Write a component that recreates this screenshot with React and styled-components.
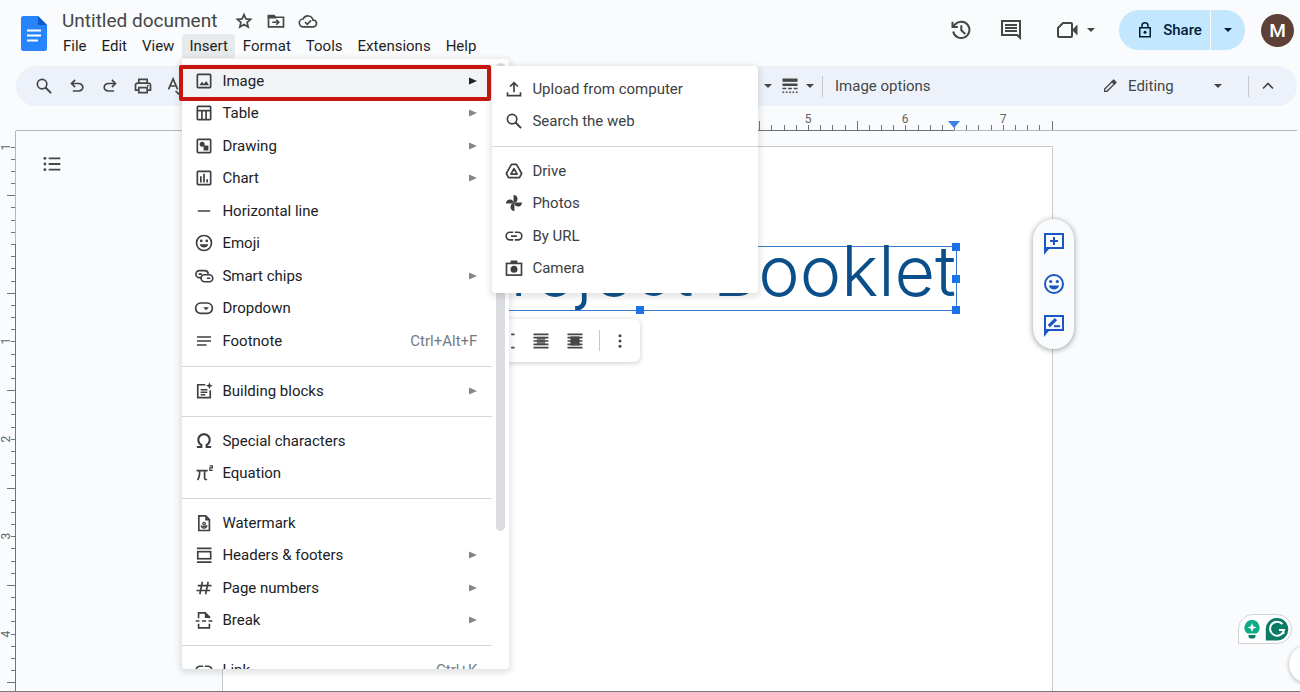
import React from "react";
import styled, { createGlobalStyle } from "styled-components";

const GlobalStyle = createGlobalStyle`
  *, *::before, *::after { box-sizing: border-box; }
  body {
    margin: 0;
    background: #f9fbfd;
    color: #1f1f1f;
    font-family: Roboto, "Liberation Sans", sans-serif;
    font-size: 15px;
    overflow: hidden;
  }
  button, input { font: inherit; color: inherit; }
`;

/* ---------- icons ---------- */

const Svg = styled.svg`
  display: block;
  flex: none;
  width: ${(p) => p.$size || 20}px;
  height: ${(p) => p.$size || 20}px;
  fill: ${(p) => (p.$fill ? "currentColor" : "none")};
  stroke: ${(p) => (p.$fill ? "none" : "currentColor")};
  stroke-width: 2;
  & .solid { fill: currentColor; stroke: none; }
`;

const Drop = styled.svg.attrs({ viewBox: "0 0 8 4", "aria-hidden": true, children: <path d="M0 0h8L4 4z" /> })`
  display: block;
  flex: none;
  width: 8px;
  height: 4px;
  fill: currentColor;
`;

const smile = (
  <>
    <circle cx="12" cy="12" r="9" />
    <circle className="solid" cx="8.7" cy="9.5" r="1.6" />
    <circle className="solid" cx="15.3" cy="9.5" r="1.6" />
    <path className="solid" d="M6.8 13.5h10.4c-.8 2.5-2.8 4-5.2 4s-4.400-1.500-5.200-4z" />
  </>
);

const shapes = {
  image: (
    <>
      <rect x="4" y="4" width="16" height="16" rx="1" />
      <path className="solid" d="M6.500 17.200l3.200-4.200 2.200 2.700 2.800-3.700 3.300 5.200z" />
    </>
  ),
  table: (
    <>
      <rect x="4" y="4" width="16" height="16" rx="1" />
      <path d="M4 9.200h16M9.500 9.200V20M14.500 9.200V20" />
    </>
  ),
  drawing: (
    <>
      <rect x="4" y="4" width="16" height="16" rx="1" />
      <circle className="solid" cx="9.800" cy="9.800" r="3" />
      <path className="solid" d="M11.500 11.500h5.800v5.800h-5.800z" />
    </>
  ),
  chart: (
    <>
      <rect x="4" y="4" width="16" height="16" rx="1" />
      <path d="M8.200 10v7.500M12 7v10.500M15.800 13.500v4" />
    </>
  ),
  line: <path d="M4.500 12h15" />,
  emoji: smile,
  chips: (
    <>
      <path d="M9 14H6.500a4.200 4.200 0 0 1 0-8.400H13a4.200 4.200 0 0 1 4 3.900" />
      <rect x="8.500" y="10.500" width="14" height="8.400" rx="4.200" />
      <path d="M5.500 9.800h4M15.500 14.700h4" />
    </>
  ),
  dropdown: (
    <>
      <rect x="2" y="6" width="20" height="12.500" rx="6" />
      <path className="solid" d="M11 11h7l-3.500 3.700z" />
    </>
  ),
  footnote: <path d="M3.500 7.200h17M3.500 12h17M3.500 16.800h11.500" />,
  blocks: (
    <>
      <path d="M13.500 4.500H4.500v15.500h15v-9" />
      <path d="M8 10.500h8M8 13.500h8M8 16.500h5.500" />
      <path className="solid" d="M18.500 1.500l1.200 3 3 1.200-3 1.200-1.200 3-1.200-3-3-1.200 3-1.200z" />
    </>
  ),
  omega: <path strokeWidth="2.600" d="M3.500 19.200h5.300v-2.400a6.900 6.900 0 1 1 6.400 0v2.400h5.300" />,
  pi: (
    <>
      <path d="M3 9.200h13.500M6.800 9.500c0 5-.8 8.500-2.500 11M12.700 9.500v8.600c0 1.700 1.500 2.100 2.800 1.300" />
      <path strokeWidth="1.500" d="M18.800 3.300h3.200v2.500h-3v3h3.500" />
    </>
  ),
  watermark: (
    <>
      <path d="M14 3.500H5.800V21h12.700V8z" />
      <path className="solid" d="M13.500 3v6h5.800z" />
      <circle cx="12.100" cy="12.800" r="1.500" strokeWidth="1.500" />
      <path strokeWidth="1.500" d="M8.800 14.800c0 2.800 1.500 3.400 3.300 3.400s3.300-.6 3.300-3.400M9.500 17l5.200-1.500" />
    </>
  ),
  headers: (
    <>
      <path d="M3.500 4h17.500M3.500 20.500h17.500" />
      <rect x="4.500" y="8" width="15.500" height="8.500" />
    </>
  ),
  hash: <path d="M10 4.500L7 19.500M17 4.500L14 19.500M4.500 9.200h16.500M3 15h16.500" />,
  pagebreak: (
    <>
      <path d="M5.500 9.800V3.500H13.500L18.500 8.500V9.800M5.500 16.500V21.500H18.500V16.500" />
      <path className="solid" d="M13 3v6.500h6z" />
      <path d="M2 13.200h4.500M9.500 13.200h5M17.500 13.200h4.500" />
    </>
  ),
  link: <path d="M11 7.500H7.200a4.600 4.600 0 0 0 0 9.200H11M13 7.500h3.800a4.600 4.600 0 0 1 0 9.200H13M8.500 12.100h7" />,
  upload: <path d="M12 16V4.500M7.300 9L12 4.300 16.700 9M4.200 16v4h15.600v-4" />,
  search: (
    <>
      <circle cx="9.700" cy="9.700" r="5.700" />
      <path strokeWidth="2.400" d="M13.800 13.800l6.700 6.700" />
    </>
  ),
  drive: (
    <>
      <path strokeLinejoin="round" d="M9 4h6l6.200 11-2.700 5H5.500l-2.700-5z" />
      <path strokeLinejoin="round" d="M12 9.300l3.800 6.400H8.200z" />
    </>
  ),
  photos: (
    <g className="solid">
      <path d="M11.500 2.500h.7c2.800.5 4 2.200 4 4.700 0 2.600-1.500 4.300-4.700 4.800z" />
      <path d="M21.500 11.500v.7c-.5 2.800-2.200 4-4.700 4-2.600 0-4.300-1.500-4.800-4.700z" />
      <path d="M12.500 21.500h-.7c-2.800-.5-4-2.200-4-4.700 0-2.600 1.500-4.300 4.700-4.800z" />
      <path d="M2.500 12.500v-.7c.5-2.800 2.200-4 4.700-4 2.600 0 4.300 1.500 4.800 4.700z" />
    </g>
  ),
  camera: (
    <>
      <rect x="3" y="6.500" width="18" height="14" />
      <path className="solid" d="M8 3h8v4H8z" />
      <circle className="solid" cx="12" cy="13.500" r="4.200" />
    </>
  ),
  star: <path d="M12 4.300l2.300 5.200 5.700.5-4.300 3.700 1.300 5.500-5-3-5 3 1.300-5.500L4 10l5.700-.5z" />,
  move: (
    <>
      <path d="M3 5.500h6.500l2 2H21v11.500H3z" />
      <path className="solid" d="M2 5h8l2.500 4H2z" />
      <path d="M7.500 13.500h7.500M12.300 10.500l3 3-3 3" />
    </>
  ),
  cloud: (
    <>
      <path d="M6.500 19a4.700 4.700 0 0 1-.4-9.400 6.300 6.300 0 0 1 11.900 1.400A4 4 0 0 1 18.500 19z" />
      <path d="M8.500 13.300l2.600 2.600 4.600-4.600" />
    </>
  ),
  history: (
    <>
      <path d="M4.200 13.500a8.200 8.200 0 1 0 2-7.200L3.500 9" />
      <path d="M3.500 3.800V9h5.300M12.300 7.300v5l4 3.700" />
    </>
  ),
  comment: (
    <>
      <path d="M3 3h18v16.500l-2.800-2.500H3z" />
      <path className="solid" d="M22 22l-5-5h5z" />
      <path d="M6 7h12M6 10h12M6 13h12" />
    </>
  ),
  video: (
    <>
      <path d="M8 5h8a1 1 0 0 1 1 1v12a1 1 0 0 1-1 1H4a1 1 0 0 1-1-1V10z" />
      <path className="solid" d="M17 12l5.500-5.500v11z" />
    </>
  ),
  lock: (
    <>
      <rect x="5" y="9" width="14" height="12" />
      <path d="M8 9V6.200a4 4 0 0 1 8 0V9" />
      <circle className="solid" cx="12" cy="15" r="2" />
    </>
  ),
  print: (
    <>
      <path d="M7 8V4h10v4M7 17H3V11a2.500 2.500 0 0 1 2.500-2.500h13A2.500 2.500 0 0 1 21 11v6h-4" />
      <path d="M7 14h10v6H7z" />
      <circle className="solid" cx="17.800" cy="11.700" r="1.100" />
    </>
  ),
  spell: (
    <>
      <path d="M3 16L8.500 3.500 14 16M5 12h7" />
      <path d="M11.500 18l3.500 3.500 7-7" />
    </>
  ),
  pencil: (
    <>
      <path d="M4 20v-3.500L15 5.500l3.500 3.500L7.500 20z" />
      <path className="solid" d="M14 5l2.500-2.500a1.500 1.500 0 0 1 2 0l3 3a1.500 1.500 0 0 1 0 2L19 10z" />
    </>
  ),
  up: <path d="M6 15l6-6 6 6" />,
  outline: (
    <>
      <path strokeWidth="2.200" d="M8 5.200h14M8 12h14M8 18.800h14" />
      <g className="solid">
        <circle cx="3.500" cy="5.200" r="1.700" />
        <circle cx="3.500" cy="12" r="1.700" />
        <circle cx="3.500" cy="18.800" r="1.700" />
      </g>
    </>
  ),
  dash: (
    <>
      <path strokeWidth="4" d="M3 5h18" />
      <path d="M3 10.500h18" strokeWidth="3" />
      <path d="M3 15h4.500M9.700 15h4.500M16.500 15H21" />
      <path d="M3 19.500h2M7 19.500h2M11 19.500h2M15 19.500h2M19 19.500h2" />
    </>
  ),
  wrap: <path d="M3 4h4M3 20h4M17 4h4M17 20h4" />,
  behind: (
    <>
      <path d="M3 4h18M3 8h18M3 12h18M3 16h18M3 20h18" />
      <path className="solid" opacity=".7" d="M7 7h10v10H7z" />
    </>
  ),
  front: (
    <>
      <path d="M3 4h18M3 8h18M3 12h18M3 16h18M3 20h18" />
      <path className="solid" d="M6.500 6.500h11v11h-11z" />
    </>
  ),
  more: (
    <g className="solid">
      <circle cx="12" cy="5" r="2" />
      <circle cx="12" cy="12" r="2" />
      <circle cx="12" cy="19" r="2" />
    </g>
  ),
  addComment: (
    <>
      <path d="M3 21V3h18v14H6z" />
      <path className="solid" d="M2 23v-7h7z" />
      <path d="M12 6v8M8 10h8" />
    </>
  ),
  suggest: (
    <>
      <path d="M3 21V3h18v14H6z" />
      <path className="solid" d="M2 23v-7h7z" />
      <path strokeWidth="3.200" d="M6.800 13.200L14 6.200" />
      <path d="M12 13.200h6" />
    </>
  ),
};

const symbols = {
  undo: "M280-200v-80h284q63 0 109.500-40T720-420q0-60-46.500-100T564-560H312l104 104-56 56-200-200 200-200 56 56-104 104h252q97 0 166.500 63T800-420q0 94-69.500 157T564-200H280Z",
  redo: "M396-200q-97 0-166.500-63T160-420q0-94 69.500-157T396-640h252L544-744l56-56 200 200-200 200-56-56 104-104H396q-63 0-109.500 40T240-420q0 60 46.500 100T396-280h284v80H396Z",
};

function Icon({ name, size }) {
  if (symbols[name]) {
    return (
      <Svg viewBox="0 -960 960 960" $size={size} $fill aria-hidden="true">
        <path d={symbols[name]} />
      </Svg>
    );
  }
  return (
    <Svg viewBox="0 0 24 24" $size={size} aria-hidden="true">
      {shapes[name]}
    </Svg>
  );
}

/* ---------- frame ---------- */

const Shell = styled.div`
  display: flex;
  flex-direction: column;
  height: 100vh;
  border-bottom: 1px solid #77797c;
`;

const Header = styled.header`
  display: flex;
  align-items: flex-start;
  height: 66px;
  padding-left: 21px;
`;

const Logo = styled.a`
  display: block;
  margin-top: 16px;
  & svg { display: block; width: 26px; height: 35px; }
`;

const TitleColumn = styled.div`
  padding: 7px 0 0 8px;
`;

const TitleRow = styled.div`
  display: flex;
  align-items: center;
  gap: 12px;
  height: 27px;
  color: #444746;
`;

const TitleInput = styled.input`
  width: 167px;
  height: 26px;
  padding: 0 0 0 6px;
  border: 1px solid transparent;
  background: none;
  font-size: 19px;
`;

const IconButton = styled.button`
  display: flex;
  align-items: center;
  justify-content: center;
  flex: none;
  width: ${(p) => p.$w || 20}px;
  height: ${(p) => p.$h || 20}px;
  padding: 0;
  border: 0;
  background: none;
  color: ${(p) => p.$color || "#444746"};
  cursor: pointer;
`;

const MenuBar = styled.nav`
  display: flex;
  gap: 1px;
  padding-left: 1px;
`;

const MenuAnchor = styled.div`
  position: relative;
`;

const MenuButton = styled.button`
  height: 24px;
  padding: 0 7px;
  border: 0;
  border-radius: 4px 4px 0 0;
  background: ${(p) => (p.$open ? "#e7eaed" : "none")};
  line-height: 24px;
  cursor: pointer;
`;

const HeaderActions = styled.div`
  display: flex;
  align-items: center;
  margin-left: auto;
  padding: 10px 6px 0 0;
`;

const ActionGroup = styled.div`
  display: flex;
  align-items: center;
  gap: 26px;
  margin-right: 24px;
  color: #444746;
`;

const CallButton = styled.button`
  display: flex;
  align-items: center;
  gap: 8px;
  margin-left: 6px;
  padding: 0;
  border: 0;
  background: none;
  cursor: pointer;
`;

const Share = styled.div`
  display: flex;
  gap: 1px;
  height: 40px;
  overflow: hidden;
  border-radius: 20px;
  font-weight: 500;
`;

const ShareButton = styled.button`
  display: flex;
  align-items: center;
  justify-content: center;
  gap: 9px;
  width: ${(p) => p.$w}px;
  padding: 0 0 0 ${(p) => p.$pad || 0}px;
  border: 0;
  background: #c2e7ff;
  color: #001d35;
  cursor: pointer;
`;

const Avatar = styled.button`
  width: 33px;
  height: 33px;
  margin-left: 16px;
  padding: 0;
  border: 0;
  border-radius: 50%;
  background: #5d4037;
  color: #fff;
  font-size: 19px;
  font-weight: 500;
  cursor: pointer;
`;

/* ---------- toolbar ---------- */

const Toolbar = styled.div`
  display: flex;
  align-items: center;
  flex: none;
  height: 40px;
  margin: 0 3px 0 16px;
  padding: 0 10px 0 18px;
  border-radius: 20px;
  background: #edf2fa;
  color: #444746;
`;

const ToolGroup = styled.div`
  display: flex;
  align-items: center;
  gap: 13px;
  flex: 0 0 730px;
`;

const DropButton = styled(IconButton)`
  gap: 6px;
`;

const Divider = styled.span`
  flex: none;
  width: 1px;
  height: 21px;
  background: #c7c9cc;
`;

const TextButton = styled.button`
  padding: 0 12px;
  border: 0;
  background: none;
  cursor: pointer;
`;

const ModeButton = styled.button`
  display: flex;
  align-items: center;
  gap: 10px;
  width: 120px;
  margin: 0 26px 0 auto;
  padding: 0;
  border: 0;
  background: none;
  cursor: pointer;
  & svg:last-child { margin-left: auto; }
`;

/* ---------- menus ---------- */

const Panel = styled.div`
  position: absolute;
  background: #fff;
  box-shadow: 0 2px 6px 2px rgba(60, 64, 67, 0.15);
`;

const InsertPanel = styled(Panel)`
  z-index: 5;
  top: 25px;
  left: 0;
  width: 327px;
  height: calc(100vh - 82px);
  overflow: hidden;
  border-radius: 0 4px 4px 4px;
  padding: 5px 17px 0 0;
`;

const SubPanel = styled(Panel)`
  z-index: 7;
  top: 32px;
  left: 310px;
  width: 266px;
  border-radius: 4px;
  padding: 6px 0 0;
`;

const Thumb = styled.span`
  position: absolute;
  top: 4px;
  right: 4px;
  width: 9px;
  height: 468px;
  border-radius: 5px;
  background: #dadce0;
`;

const Highlight = styled.span`
  position: absolute;
  z-index: 6;
  top: 31px;
  left: -3px;
  width: 312px;
  height: 36px;
  border: 4px solid #c9150f;
  border-radius: 2px;
  pointer-events: none;
`;

const Section = styled.div`
  padding-bottom: 9px;
  & + & {
    padding-top: 7px;
    border-top: 1px solid #d5d7da;
  }
`;

const Row = styled.button`
  display: flex;
  align-items: center;
  gap: 8px;
  width: 100%;
  height: 32px;
  padding: 0 15px 0 12px;
  border: 0;
  background: ${(p) => (p.$active ? "#f1f3f4" : "none")};
  color: #3c4043;
  line-height: 16px;
  text-align: left;
  cursor: pointer;
  &:nth-child(odd) { height: 33px; }
`;

const RowLabel = styled.span`
  flex: 1;
  color: ${(p) => (p.$soft ? "#3c4043" : "#202124")};
`;

const Shortcut = styled.kbd`
  color: #757a7f;
  font-family: inherit;
`;

const Arrow = styled.svg`
  width: 8px;
  height: 8px;
  fill: ${(p) => (p.$active ? "#202124" : "#80868b")};
`;

const insertMenu = [
  [
    { icon: "image", label: "Image", sub: true, active: true },
    { icon: "table", label: "Table", sub: true },
    { icon: "drawing", label: "Drawing", sub: true },
    { icon: "chart", label: "Chart", sub: true },
    { icon: "line", label: "Horizontal line" },
    { icon: "emoji", label: "Emoji" },
    { icon: "chips", label: "Smart chips", sub: true },
    { icon: "dropdown", label: "Dropdown" },
    { icon: "footnote", label: "Footnote", keys: "Ctrl+Alt+F" },
  ],
  [{ icon: "blocks", label: "Building blocks", sub: true }],
  [
    { icon: "omega", label: "Special characters" },
    { icon: "pi", label: "Equation" },
  ],
  [
    { icon: "watermark", label: "Watermark" },
    { icon: "headers", label: "Headers & footers", sub: true },
    { icon: "hash", label: "Page numbers", sub: true },
    { icon: "pagebreak", label: "Break", sub: true },
  ],
  [{ icon: "link", label: "Link", keys: "Ctrl+K" }],
];

const imageMenu = [
  [
    { icon: "upload", label: "Upload from computer" },
    { icon: "search", label: "Search the web" },
  ],
  [
    { icon: "drive", label: "Drive" },
    { icon: "photos", label: "Photos" },
    { icon: "link", label: "By URL" },
    { icon: "camera", label: "Camera" },
  ],
];

function MenuSections({ sections, soft }) {
  return sections.map((items) => (
    <Section key={items[0].label} role="group">
      {items.map((item) => (
        <Row key={item.label} role="menuitem" $active={item.active}>
          <Icon name={item.icon} />
          <RowLabel $soft={soft}>{item.label}</RowLabel>
          {item.keys && <Shortcut>{item.keys}</Shortcut>}
          {item.sub && (
            <Arrow viewBox="0 0 8 8" $active={item.active} aria-hidden="true">
              <path d="M0 .5l8 3.500-8 3.500z" />
            </Arrow>
          )}
        </Row>
      ))}
    </Section>
  ));
}

/* ---------- rulers ---------- */

const INCH = 97.4;

const RulerBar = styled.div`
  display: flex;
  justify-content: center;
  flex: none;
  height: 25px;
  margin: 0 3px 0 16px;
  padding-right: 39px;
  border-bottom: 1px solid #b4b7ba;
`;

const RulerSvg = styled.svg`
  display: block;
  flex: none;
  width: ${(p) => p.$w}px;
  height: ${(p) => p.$h}px;
  overflow: visible;
  stroke: #6f7377;
  & text {
    fill: #5f6368;
    stroke: none;
    font-size: 12px;
    text-anchor: middle;
  }
`;

const ticks = (from, to) => {
  const list = [];
  for (let i = from * 8; i <= to * 8; i += 1) list.push(i);
  return list;
};

function TopRuler() {
  const at = (inches) => Math.round(99 + inches * INCH);
  return (
    <RulerSvg $w={830} $h={25} aria-hidden="true">
      {ticks(-1, 7.5).map((i) => {
        const x = at(i / 8) + 0.5;
        return <path key={i} d={`M${x} 24V${i % 8 !== 0 && i % 4 === 0 ? 15 : 19}`} />;
      })}
      {[1, 2, 3, 4, 5, 6, 7].map((n) => (
        <text key={n} x={at(n)} y="17">{n}</text>
      ))}
      <path d="M100 24.500H732" />
      <path d="M726 15h12l-6 7z" fill="#3f7fe8" stroke="none" />
    </RulerSvg>
  );
}

const SideRulerBox = styled.div`
  flex: none;
  width: 16px;
  overflow: hidden;
`;

function SideRuler() {
  const at = (inches) => Math.round(113 + inches * INCH);
  return (
    <SideRulerBox>
      <RulerSvg $w={16} $h={1100} aria-hidden="true">
        {ticks(-1, 9).map((i) => {
          const y = at(i / 8) + 0.5;
          return <path key={i} d={`M16 ${y}H${i % 8 !== 0 && i % 4 === 0 ? 7 : 11}`} />;
        })}
        {[-1, 1, 2, 3, 4, 5, 6, 7, 8].map((n) => (
          <text key={n} transform={`translate(10 ${at(n)}) rotate(-90)`}>{Math.abs(n)}</text>
        ))}
        <path d="M15.500 0V113" stroke="#b4b7ba" />
        <path d="M15.500 113V1100" />
      </RulerSvg>
    </SideRulerBox>
  );
}

/* ---------- document ---------- */

const Workspace = styled.main`
  display: flex;
  flex: 1;
  min-height: 0;
  overflow: hidden;
`;

const Canvas = styled.div`
  position: relative;
  display: flex;
  justify-content: center;
  flex: 1;
  padding: 15px 41px 0 0;
  overflow: hidden;
`;

const OutlineButton = styled(IconButton)`
  position: absolute;
  top: 23px;
  left: 25px;
`;

const Page = styled.article`
  position: relative;
  flex: none;
  width: 831px;
  height: 1075px;
  padding: 99px 95px 0 100px;
  border: 1px solid #c7c9cc;
  background: #fff;
`;

const Selection = styled.div`
  position: relative;
  height: 65px;
  border: 1px solid #3a79c9;
`;

const Heading = styled.h1`
  margin: 0;
  color: #0b4f8a;
  font-family: Inter, Lato, sans-serif;
  font-size: 70px;
  font-weight: 300;
  line-height: 48px;
  text-align: right;
  white-space: nowrap;
`;

const Handle = styled.span`
  position: absolute;
  top: ${(p) => p.$y};
  left: ${(p) => p.$x};
  width: 8px;
  height: 8px;
  margin: -4px;
  background: #1a73e8;
`;

const ImageBar = styled.div`
  display: flex;
  align-items: center;
  gap: 14px;
  width: 200px;
  height: 43px;
  margin: 8px 0 0 117px;
  padding: 0 14px 0 8px;
  justify-content: flex-end;
  border-radius: 6px;
  background: #fff;
  box-shadow: 0 1px 4px 1px rgba(60, 64, 67, 0.2);
`;

const SidePill = styled.div`
  position: absolute;
  top: 72px;
  right: -22px;
  display: flex;
  flex-direction: column;
  align-items: center;
  justify-content: space-between;
  width: 41px;
  height: 130px;
  padding: 12px 0;
  border-radius: 21px;
  background: #f9fbfd;
  box-shadow: 0 1px 5px 1px rgba(60, 64, 67, 0.4);
`;

const WritingHelper = styled.div`
  position: absolute;
  right: 8px;
  bottom: 47px;
  display: flex;
  align-items: center;
  gap: 4px;
  width: 54px;
  height: 30px;
  padding: 0 2px 0 4px;
  border: 1px solid #d0d3d8;
  border-radius: 15px 15px 15px 0;
  background: #fff;
`;

const SideTab = styled.button`
  position: absolute;
  right: -27px;
  bottom: 8px;
  width: 38px;
  height: 38px;
  border: 0;
  border-radius: 50%;
  background: #fff;
  box-shadow: 0 1px 4px rgba(60, 64, 67, 0.4);
`;

const menus = ["File", "Edit", "View", "Insert", "Format", "Tools", "Extensions", "Help"];

export default function App() {
  return (
    <Shell>
      <GlobalStyle />
      <Header>
        <Logo href="#" aria-label="Docs home">
          <svg viewBox="0 0 26 35" aria-hidden="true">
            <path d="M2.500 0H17l9 9v23.500a2.500 2.500 0 0 1-2.500 2.500h-21A2.500 2.500 0 0 1 0 32.500v-30A2.500 2.500 0 0 1 2.500 0z" fill="#2684fc" />
            <path d="M17 0l9 9h-9z" fill="#0d5bcd" />
            <path d="M6 14.500h14M6 19.500h14M6 24.500h11" stroke="#fff" strokeWidth="2" />
          </svg>
        </Logo>
        <TitleColumn>
          <TitleRow>
            <TitleInput aria-label="Document title" defaultValue="Untitled document" />
            <IconButton aria-label="Star"><Icon name="star" size={20} /></IconButton>
            <IconButton aria-label="Move"><Icon name="move" size={20} /></IconButton>
            <IconButton aria-label="Document status"><Icon name="cloud" size={20} /></IconButton>
          </TitleRow>
          <MenuBar aria-label="Main">
            {menus.map((name) =>
              name === "Insert" ? (
                <MenuAnchor key={name}>
                  <MenuButton $open aria-expanded="true">{name}</MenuButton>
                  <InsertPanel role="menu" aria-label="Insert">
                    <MenuSections sections={insertMenu} />
                    <Thumb />
                  </InsertPanel>
                  <Highlight />
                  <SubPanel role="menu" aria-label="Image">
                    <MenuSections sections={imageMenu} soft />
                  </SubPanel>
                </MenuAnchor>
              ) : (
                <MenuButton key={name}>{name}</MenuButton>
              )
            )}
          </MenuBar>
        </TitleColumn>
        <HeaderActions>
          <ActionGroup>
            <IconButton $w={24} aria-label="Version history"><Icon name="history" size={24} /></IconButton>
            <IconButton $w={24} aria-label="Comments"><Icon name="comment" size={24} /></IconButton>
            <CallButton aria-label="Join a call"><Icon name="video" size={24} /><Drop /></CallButton>
          </ActionGroup>
          <Share>
            <ShareButton $w={91} $pad={9}><Icon name="lock" size={18} />Share</ShareButton>
            <ShareButton $w={34} aria-label="Share options"><Drop /></ShareButton>
          </Share>
          <Avatar aria-label="Account">M</Avatar>
        </HeaderActions>
      </Header>

      <Toolbar role="toolbar" aria-label="Formatting">
        <ToolGroup>
          <IconButton aria-label="Search the menus"><Icon name="search" size={20} /></IconButton>
          <IconButton aria-label="Undo"><Icon name="undo" size={20} /></IconButton>
          <IconButton aria-label="Redo"><Icon name="redo" size={20} /></IconButton>
          <IconButton aria-label="Print"><Icon name="print" size={20} /></IconButton>
          <IconButton aria-label="Spelling"><Icon name="spell" size={20} /></IconButton>
        </ToolGroup>
        <IconButton $w={8} aria-label="Border weight"><Drop /></IconButton>
        <DropButton $w={50} aria-label="Border dash"><Icon name="dash" size={20} /><Drop /></DropButton>
        <Divider />
        <TextButton>Image options</TextButton>
        <ModeButton><Icon name="pencil" size={16} />Editing<Drop /></ModeButton>
        <Divider />
        <IconButton $w={38} aria-label="Hide the menus"><Icon name="up" size={20} /></IconButton>
      </Toolbar>

      <RulerBar><TopRuler /></RulerBar>

      <Workspace>
        <SideRuler />
        <Canvas>
          <OutlineButton $w={22} aria-label="Show outline"><Icon name="outline" size={20} /></OutlineButton>
          <Page>
            <Selection>
              <Heading>Project Booklet</Heading>
              <Handle $x="0%" $y="0%" />
              <Handle $x="100%" $y="0%" />
              <Handle $x="100%" $y="50%" />
              <Handle $x="100%" $y="100%" />
              <Handle $x="50%" $y="100%" />
            </Selection>
            <ImageBar>
              <IconButton aria-label="Wrap text"><Icon name="wrap" size={20} /></IconButton>
              <IconButton aria-label="Behind text"><Icon name="behind" size={20} /></IconButton>
              <IconButton aria-label="In front of text"><Icon name="front" size={20} /></IconButton>
              <Divider />
              <IconButton $w={12} aria-label="More"><Icon name="more" size={18} /></IconButton>
            </ImageBar>
            <SidePill>
              <IconButton $w={24} $h={24} $color="#1a56c4" aria-label="Add comment"><Icon name="addComment" size={24} /></IconButton>
              <IconButton $w={24} $h={24} $color="#1a56c4" aria-label="Add emoji reaction"><Icon name="emoji" size={24} /></IconButton>
              <IconButton $w={24} $h={24} $color="#1a56c4" aria-label="Suggest edits"><Icon name="suggest" size={24} /></IconButton>
            </SidePill>
          </Page>
          <WritingHelper>
            <svg width="18" height="22" viewBox="0 0 18 22" aria-hidden="true">
              <path d="M9 2a7.500 7.500 0 0 1 4.500 13.500h-9A7.500 7.500 0 0 1 9 2z" fill="#0fab86" />
              <path d="M5.500 17h7v1a2.500 2.500 0 0 1-2.500 2.500H8A2.500 2.500 0 0 1 5.500 18z" fill="#0a7d68" />
              <path d="M9 5l1.200 3.300L13.500 9.500l-3.300 1.200L9 14l-1.200-3.300L4.500 9.500l3.300-1.200z" fill="#fff" />
            </svg>
            <svg width="24" height="24" viewBox="0 0 24 24" aria-hidden="true">
              <path d="M12 1a11 11 0 0 1 0 22.500H.8V12A11 11 0 0 1 12 1z" fill="#0b7a66" />
              <path d="M17.500 7.200A7 7 0 1 0 19 13h-5M18.500 17v-4" fill="none" stroke="#fff" strokeWidth="2" />
            </svg>
          </WritingHelper>
          <SideTab aria-label="Show side panel" />
        </Canvas>
      </Workspace>
    </Shell>
  );
}
